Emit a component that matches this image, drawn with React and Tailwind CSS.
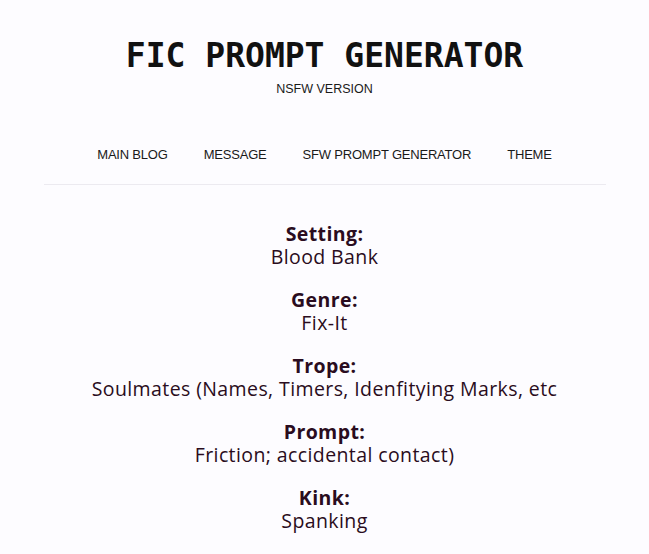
export default function App() {
  const fields = [
    { label: 'Setting:', value: 'Blood Bank' },
    { label: 'Genre:', value: 'Fix-It' },
    { label: 'Trope:', value: 'Soulmates (Names, Timers, Idenfitying Marks, etc' },
    { label: 'Prompt:', value: 'Friction; accidental contact)' },
    { label: 'Kink:', value: 'Spanking' },
  ];
  const links = ['MAIN BLOG', 'MESSAGE', 'SFW PROMPT GENERATOR', 'THEME'];

  return (
    <div className="min-h-screen bg-[#fdfcff] text-[#111]">
      <div className="max-w-[562px] mx-auto">
        {/* Header */}
        <header className="pt-[36px] text-center">
          <h1 className="font-['DejaVu_Sans_Mono',monospace] font-bold text-[33px] leading-[40px]">
            FIC PROMPT GENERATOR
          </h1>
          <p className="font-['Liberation_Sans',Arial,sans-serif] text-[12.5px] leading-[14px] mt-[6px] text-[#1a1a1a]">
            NSFW VERSION
          </p>
        </header>

        {/* Nav */}
        <nav className="mt-[51px] pb-[21px] border-b border-[#eceaf0] flex justify-center gap-[36px] font-['Liberation_Sans',Arial,sans-serif] text-[13px] leading-[16px] text-[#1a1a1a] tracking-[-0.2px]">
          {links.map((l) => (
            <a key={l} href="#" className="block">{l}</a>
          ))}
        </nav>

        {/* Prompt */}
        <main className="pt-[37px] flex flex-col gap-[20px] text-center text-[#2a0c20] font-['Open_Sans',sans-serif] text-[19.5px] leading-[23px] tracking-[0.4px]">
          {fields.map((f) => (
            <div key={f.label}>
              <div className="font-bold">{f.label}</div>
              <div>{f.value}</div>
            </div>
          ))}
        </main>
      </div>
    </div>
  );
}
